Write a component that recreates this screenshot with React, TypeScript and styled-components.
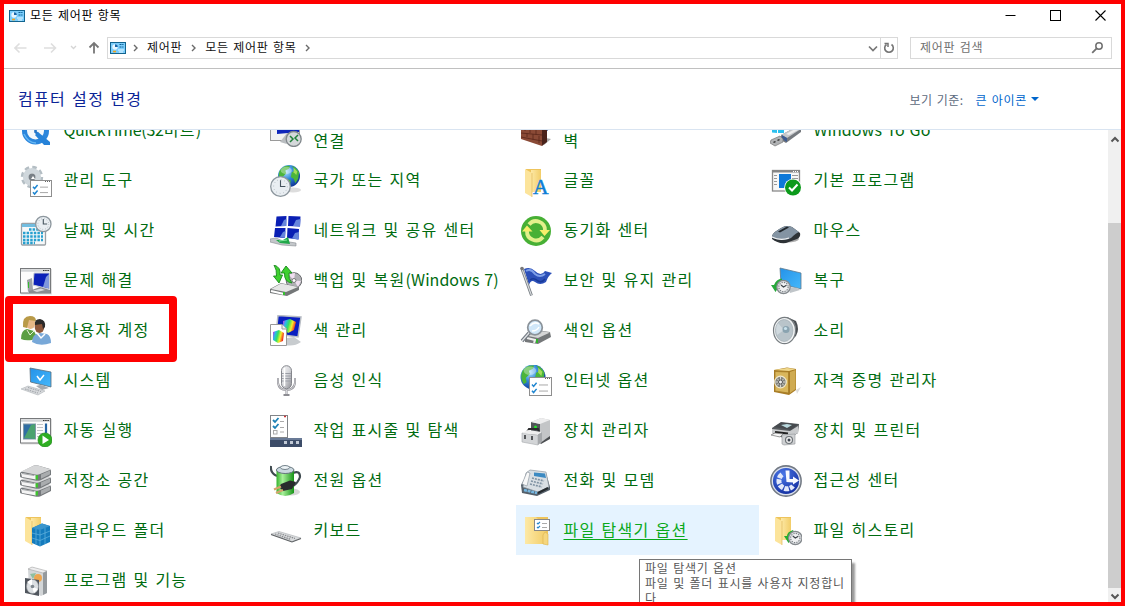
import React from 'react';
import styled, { createGlobalStyle } from 'styled-components';

const GlobalStyle = createGlobalStyle`
  * { box-sizing: border-box; }
  html, body { margin: 0; padding: 0; overflow: hidden; }
  body { font-family: "Noto Sans CJK KR", "Noto Sans", sans-serif; background: #fff; }
`;

const Window = styled.div`
  position: relative;
  display: flex;
  flex-direction: column;
  width: 1125px;
  height: 606px;
  border: 4px solid #ff0000;
  background: #fff;
  overflow: hidden;
  font-size: 12px;
  letter-spacing: 0.7px;
  word-spacing: 1.1px;
`;

const TitleBar = styled.header`
  display: flex;
  align-items: center;
  height: 23px;
  padding: 0 15px 0 5px;
  color: #000;
`;

const TitleText = styled.span`
  flex: 1;
  margin: -2px 0 0 5px;
  line-height: 20px;
`;

const WindowButtons = styled.div`
  display: flex;
  gap: 34px;
  margin-top: -1px;
  svg { display: block; }
`;

const NavBar = styled.nav`
  display: flex;
  align-items: center;
  height: 42px;
  padding: 0 9px 0 10px;
  border-bottom: 1px solid #c0c0c0;
`;

const NavArrows = styled.div`
  display: flex;
  align-items: center;
  width: 93px;
  svg { display: block; }
`;

const AddressBar = styled.div`
  display: flex;
  align-items: center;
  width: 791px;
  height: 22px;
  border: 1px solid #d9d9d9;
  padding-left: 2px;
  color: #111;
  line-height: 19px;
  svg { display: block; flex: none; }
`;

const Crumb = styled.span`
  margin: -3px 9px 0 8px;
`;

const RefreshButton = styled.div`
  display: flex;
  align-items: center;
  justify-content: center;
  width: 17px;
  height: 20px;
  margin-left: 2px;
  border-left: 1px solid #d9d9d9;
`;

const Spring = styled.div`
  flex: 1;
`;

const SearchBox = styled.div`
  display: flex;
  align-items: center;
  justify-content: space-between;
  width: 202px;
  height: 22px;
  margin-left: 12px;
  padding: 0 7px 0 9px;
  border: 1px solid #d9d9d9;
  color: #707070;
  span { margin-top: -3px; line-height: 19px; }
`;

const Heading = styled.div`
  display: flex;
  align-items: center;
  height: 61px;
  padding: 0 82px 0 14px;
  border-bottom: 1px solid #d9e4f1;
`;

const HeadingTitle = styled.h1`
  flex: 1;
  margin: -2px 0 0;
  font-size: 16px;
  font-weight: 400;
  letter-spacing: 1.32px;
  line-height: 24px;
  color: #0b2497;
`;

const ViewLabel = styled.span`
  color: #5d6b80;
  letter-spacing: 0.45px;
  margin-right: 12px;
`;

const ViewValue = styled.span`
  color: #0066cc;
  margin-right: 4px;
`;

const Body = styled.div`
  display: flex;
  height: 472px;
  overflow: hidden;
`;

const Grid = styled.div`
  display: grid;
  grid-template-columns: repeat(4, 243px);
  grid-auto-rows: 50px;
  column-gap: 7px;
  width: 1104px;
  margin-top: -25px;
  padding-left: 12px;
`;

const Item = styled.div<{ $hover?: boolean }>`
  display: flex;
  align-items: center;
  gap: 11.5px;
  padding: 1px 4px 0;
  background: ${(p) => (p.$hover ? '#e5f3ff' : 'transparent')};
`;

const ItemIcon = styled.svg`
  flex: none;
  display: block;
`;

const ItemLabel = styled.span<{ $hover?: boolean; $low?: boolean }>`
  font-size: 16px;
  line-height: 20px;
  letter-spacing: 1.3px;
  white-space: nowrap;
  color: ${(p) => (p.$hover ? '#0aa81a' : '#006b10')};
  margin-top: ${(p) => (p.$low ? '19px' : '-3px')};
  text-decoration: ${(p) => (p.$hover ? 'underline' : 'none')};
  text-decoration-thickness: 1px;
  text-underline-offset: 3px;
`;

const Latin = styled.span<{ $tight?: boolean }>`
  letter-spacing: ${(p) => (p.$tight ? '-0.25px' : '0.05px')};
`;

const ScrollBar = styled.div`
  display: flex;
  flex-direction: column;
  width: 13px;
  height: 472px;
  background: #f0f0f0;
  svg { display: block; flex: none; }
`;

const ScrollGap = styled.div`
  height: 76px;
`;

const Thumb = styled.div`
  flex: 1;
  background: #cdcdcd;
`;

const Highlight = styled.div`
  position: absolute;
  left: 1px;
  top: 292px;
  width: 172px;
  height: 66px;
  border: 8px solid #ff0000;
  border-radius: 4px;
`;

const Tooltip = styled.div`
  position: absolute;
  left: 635px;
  top: 555px;
  width: 213px;
  height: 60px;
  padding: 0 5px;
  border: 1px solid #767676;
  background: #fff;
  box-shadow: 3px 4px 2px rgba(0, 0, 0, 0.4);
  color: #575757;
  letter-spacing: 0.76px;
  line-height: 15px;
  white-space: nowrap;
`;

const Defs = () => (
  <svg width="0" height="0" style={{ display: 'block' }}>
    <defs>
      <linearGradient id="screen" x1="0" y1="0" x2="1" y2="1">
        <stop offset="0" stopColor="#0a18a8" /><stop offset=".45" stopColor="#0620c4" />
        <stop offset=".55" stopColor="#6f8ee6" /><stop offset="1" stopColor="#1c3bbd" />
      </linearGradient>
      <linearGradient id="metal" x1="0" y1="0" x2="1" y2="1">
        <stop offset="0" stopColor="#fbfbfb" /><stop offset=".5" stopColor="#d6d7db" /><stop offset="1" stopColor="#8c8c92" />
      </linearGradient>
      <linearGradient id="fold" x1="0" y1="0" x2="1" y2="0">
        <stop offset="0" stopColor="#fde9a6" /><stop offset="1" stopColor="#f2cd68" />
      </linearGradient>
      <linearGradient id="sky" x1="0" y1="0" x2="1" y2="1">
        <stop offset="0" stopColor="#2492e8" /><stop offset="1" stopColor="#45b8fb" />
      </linearGradient>
      <linearGradient id="batt" x1="0" y1="0" x2="1" y2="0">
        <stop offset="0" stopColor="#35b52d" /><stop offset=".35" stopColor="#a8f09a" /><stop offset="1" stopColor="#169316" />
      </linearGradient>
      <linearGradient id="rgb" x1="0" y1="0" x2="1" y2=".3">
        <stop offset="0" stopColor="#e81ee0" /><stop offset=".25" stopColor="#2bb6f0" /><stop offset=".5" stopColor="#31e060" />
        <stop offset=".75" stopColor="#f7ee2a" /><stop offset="1" stopColor="#f03020" />
      </linearGradient>
      <radialGradient id="globe" cx=".35" cy=".3" r=".8">
        <stop offset="0" stopColor="#b6e6ff" /><stop offset=".45" stopColor="#2f86d8" /><stop offset="1" stopColor="#0b2a8c" />
      </radialGradient>
      <radialGradient id="deep" cx=".4" cy=".3" r=".8">
        <stop offset="0" stopColor="#4b78e8" /><stop offset="1" stopColor="#0a2294" />
      </radialGradient>
    </defs>
  </svg>
);

const Clock = ({ x, y, r }: { x: number; y: number; r: number }) => (
  <g>
    <circle cx={x} cy={y} r={r} fill="#e9eef2" stroke="#8d979e" strokeWidth="1.3" />
    <circle cx={x} cy={y} r={r * 0.7} fill="none" stroke="#a4adb4" strokeWidth=".9" strokeDasharray={`.8 ${r * 0.366 - 0.8}`} />
    <path d={`M${x} ${y - r * 0.65}V${y}H${x + r * 0.5}`} fill="none" stroke="#46545f" strokeWidth="1.1" />
  </g>
);

const SmallClock = ({ x, y }: { x: number; y: number }) => (
  <g>
    <circle cx={x} cy={y} r="6.7" fill="#d9dcdf" stroke="#84898d" strokeWidth="1.2" />
    <circle cx={x} cy={y} r="4.6" fill="#f0f1f2" stroke="#777c80" strokeWidth="1.1" strokeDasharray="1.2 1.2" />
    <path d={`M${x - 2.5} ${y - 2}L${x} ${y}L${x + 3} ${y - 1.8}`} fill="none" stroke="#3f464b" strokeWidth="1.2" />
  </g>
);

const Globe = ({ x, y, r }: { x: number; y: number; r: number }) => (
  <g transform={`translate(${x} ${y}) scale(${r / 12})`}>
    <circle r="12" fill="url(#globe)" />
    <path d="M-10-6Q-6-12 1-11L0-8-4-6-3-3-7 1-6 5-9 7Q-13 0-10-6ZM3-11Q8-10 11-4L10 3 7 8 5 3 2 1 3-4 7-6ZM-3 3L2 5 1 10-2 11Z" fill="#4bb53a" />
    <path d="M5-9L9-5 8-1 5-4Z" fill="#a4dd5a" />
    <ellipse cx="-3" cy="-6" rx="6" ry="4" fill="#fff" opacity=".35" />
  </g>
);

const Folder = ({ wide }: { wide?: boolean }) => (
  <g>
    <path d={wide ? 'M7 2H28V28H7Z' : 'M6 2H21V25H6Z'} fill="#eec45c" />
    <path d={wide ? 'M5 2H16L18 4H26V29H5Z' : 'M11 3H21V25H11Z'} fill="url(#fold)" />
    {!wide && <path d="M5 2L12 6V30L5 26Z" fill="#fce49b" />}
    {!wide && <path d="M12 6V30" stroke="#dfb95b" strokeWidth=".7" />}
  </g>
);

const Sheet = ({ x, y, w, h }: { x: number; y: number; w: number; h: number }) => (
  <g>
    <rect x={x + 0.5} y={y + 0.5} width={w - 1} height={h - 1} fill="#fff" stroke="#8e8e8e" />
    <path d={`M${x + w - 7} ${y + 1.5}h5`} stroke="#666" strokeDasharray="1 1" />
    <path d={`M${x + 3} ${y + h * 0.4}l1.6 1.8 3-3.6M${x + 3} ${y + h * 0.72}l1.6 1.8 3-3.6`} fill="none" stroke="#1f86d1" strokeWidth="1.5" />
    <path d={`M${x + 10} ${y + h * 0.42}h${w - 14}M${x + 10} ${y + h * 0.74}h${w - 14}`} stroke="#a8a8a8" />
  </g>
);

const Drive = ({ y }: { y: number }) => (
  <g transform={`translate(0 ${y})`}>
    <path d="M1 7L14 0.5Q16 0 18 .5L30 4Q31 5 31 6V10L20 15.5Q18 16 15 15.5L1 12.5Q0 12 0 11V8Z" fill="#75797c" />
    <path d="M1 6.5L14 .5Q16 0 18 .5L31 4.5 20 9Q18 10 15 9.5Z" fill="#d6d7d8" />
    <path d="M1 8L16 10.5V14.5L2 12Z" fill="#f4f4f4" />
    <path d="M2 8.5L14 10.5" stroke="#a6a9ab" />
    <path d="M15.5 10.5L18 10V14.5L15.5 14.5Z" fill="#3fc32e" />
    <path d="M21 9.5L30 5.5V9.3L21 13.8Z" fill="#a9acae" />
  </g>
);

const AppGlyph = () => (
  <svg width="16" height="12" viewBox="0 0 16 12">
    <rect x=".5" y=".5" width="15" height="11" fill="#7bcdfb" stroke="#12648f" />
    <circle cx="5" cy="5" r="2.7" fill="#e7f6ff" />
    <path d="M5 5V2.2A2.8 2.8 0 0 1 7.8 5Z" fill="#1765a8" />
    <path d="M9.5 2.5h4M9.5 5h4" stroke="#0d5f93" strokeDasharray="2 .7" />
    <path d="M3 9.5h3" stroke="#f2a21a" strokeWidth="1.6" />
    <path d="M8 8h6M9 10h4" stroke="#e9f7ff" />
  </svg>
);

const ICONS: Record<string, React.ReactNode> = {
  quicktime: (
    <g>
      <circle cx="15.500" cy="16" r="11" fill="#f4f8fb" stroke="#2b86dc" strokeWidth="5" />
      <path d="M4 19Q8 28 16 28" fill="none" stroke="#65b6f3" strokeWidth="1.500" />
      <path d="M15.500 9V17L18 19" fill="none" stroke="#2675c6" strokeWidth="2.600" />
      <path d="M18 17L30 27V30H24L15 20Z" fill="#2682d8" />
    </g>
  ),
  remote: (
    <g>
      <rect x=".5" y="2" width="29" height="23.500" fill="#f2f2f2" stroke="#9a9a9a" />
      <path d="M7 4L29 3V17L7 19Z" fill="#0e25ba" />
      <path d="M10 27L17 18 26 18 25 29Q18 30 10 27Z" fill="#b9bdc0" />
      <circle cx="23.700" cy="24" r="7.500" fill="#d4d8da" stroke="#80878b" strokeWidth="1.300" />
      <path d="M20 21L23 24 20 27M28 20L25 23 28 26" fill="none" stroke="#20803a" strokeWidth="1.500" />
    </g>
  ),
  firewall: (
    <g>
      <Globe x={20} y={9} r={10} />
      <path d="M24 30L31 24 26 23Z" fill="#aaa" />
      <path d="M1 6L22 2V31L1 24Z" fill="#8a4a36" /><path d="M22 2L27 5V27L22 31Z" fill="#4a231b" />
      <path d="M1 10L22 8M1 14L22 14M1 18L22 20M1 22L22 26M7 18V22M13 19V25M19 21V28M10 14V18M16 14V20M5 12V16" stroke="#5f2a1d" strokeWidth=".9" />
    </g>
  ),
  usb: (
    <g>
      <path d="M2 11L7 10V14H2ZM8 10L14 9V14H8ZM2 15H7V18L2 17.500ZM8 15H14V18H8Z" fill="#2cc0ee" />
      <path d="M11 20L26 12Q31 11 31 15V17L16 28 11 25Z" fill="#75797e" />
      <path d="M11 20L26 12Q30 12 31 14L17 23Z" fill="#c5c8cb" /><path d="M16 19L25 14 28 15 19 20Z" fill="#eee" />
      <path d="M12 20L17 23V27L12 24Z" fill="#3e5c91" />
      <path d="M1 25L10 21 13 24V27L5 31 0 28Z" fill="#b0b2b4" stroke="#777" strokeWidth=".7" /><path d="M3 27l2-1 1 1-2 1ZM7 25l2-1 1 1-2 1Z" fill="#333" />
    </g>
  ),
  tools: (
    <g>
      <circle cx="12" cy="12" r="8.700" fill="none" stroke="#b4bec4" strokeWidth="5" strokeDasharray="4 2.830" />
      <circle cx="12" cy="12" r="6.300" fill="none" stroke="#cfd7dc" strokeWidth="5.600" />
      <circle cx="12" cy="12" r="3.500" fill="#777f86" /><path d="M13 11L15 14H11Z" fill="#fff" />
      <Sheet x={10} y={15} w={22} h={17} />
    </g>
  ),
  region: (<g><ellipse cx="23" cy="25" rx="8" ry="2.500" fill="#ddd" /><Globe x={19} y={11} r={11} /><Clock x={10.5} y={21.5} r={9.8} /></g>),
  fonts: (
    <g><g transform="translate(0 2)"><Folder /></g>
      <text x="13" y="29" fontFamily="Liberation Serif, serif" fontSize="21.500" letterSpacing="0" fill="#0d7ed6" stroke="#0d7ed6" strokeWidth=".5">A</text>
    </g>
  ),
  defaults: (
    <g>
      <rect x="2.500" y="5.500" width="27" height="20.500" fill="#f7f7f7" stroke="#8a8a8a" strokeWidth="1.300" />
      <path d="M2 6.500H30" stroke="#858585" strokeWidth="2" /><path d="M23 6.500h6" stroke="#fff" strokeDasharray="1 1" />
      <path d="M4 10.500h3M4 13.500h3M4 16.500h3M4 19.500h3M22 10.500h6M22 13.500h6" stroke="#999" />
      <rect x="9" y="9" width="12" height="14" fill="#0e78d8" />
      <circle cx="23" cy="22.500" r="8.800" fill="#fff" /><circle cx="23" cy="22.500" r="8" fill="#0c9a1b" />
      <path d="M19 22.500L22 25.500 27.500 19.500" fill="none" stroke="#fff" strokeWidth="2" />
    </g>
  ),
  date: (
    <g>
      <rect x="1.500" y="8.500" width="24" height="21.500" rx="1" fill="#f6f8f9" stroke="#9aa1a6" strokeWidth="1.300" />
      <path d="M2 9H25V12H2Z" fill="#72bde0" />
      <path d="M9 14.500H23M3 18H23M3 21.500H23M3 25H23M3 28H15" stroke="#27a0cf" strokeWidth="2.300" strokeDasharray="2.500 1.100" />
      <Clock x={23.3} y={9} r={7.7} />
    </g>
  ),
  network: (
    <g>
      <g fill="#0a1fb4">
        <path d="M6.500 1.500L16.500 1 16 11 5.500 11.500ZM18.500 1L30.500 1.500 30 11.500 18 11ZM5 13L15.500 13 15 23 4 22ZM17.500 13L29 14 28.500 24.500 17 23Z" />
      </g>
      <path d="M11 11L14 5 16.500 4V11ZM23 11L26 5 30.500 4 30 11.500ZM10 22L13 17 15.500 16 15 23ZM22 23.500L25 18 29 17 28.500 24.500Z" fill="#6685dc" />
      <path d="M0 24L6 23 13 26 26 28 26 31 12 30 0 27Z" fill="#c3c7ca" stroke="#868b90" strokeWidth=".6" />
      <path d="M6 25L13 25 18 22 20 29 10 28Z" fill="#21a84a" /><path d="M9 26L17 25" stroke="#86e79f" />
    </g>
  ),
  sync: (
    <g>
      <circle cx="16" cy="16" r="15" fill="#47b035" />
      <path d="M9 9.500A9 9 0 0 1 25 15.500" fill="none" stroke="#e2f08c" strokeWidth="3.800" />
      <path d="M7 16A9 9 0 0 0 23 22" fill="none" stroke="#e2f08c" strokeWidth="3.800" />
      <path d="M2 16.500L7 10.500 12.500 16.500ZM19.500 15H30L24.500 21Z" fill="#f7ee6a" />
    </g>
  ),
  mouse: (
    <g>
      <ellipse cx="17" cy="24" rx="12" ry="3.500" fill="#555" opacity=".5" />
      <path d="M2 21Q3 17 13 12Q17 10 22 12L30 18Q31 22 27 24L16 28Q8 29 2 24Z" fill="#2d3236" />
      <path d="M2 21Q3 17 13 12Q17 10 22 12L29 17Q26 18 21 23 14 27 2 23Z" fill="#8494a3" />
      <path d="M2 22Q10 26 19 23" fill="none" stroke="#f3f3f3" strokeWidth="1.300" />
      <path d="M8 16.500L17 11.500 19 12.500 10 17.500Z" fill="#22282d" />
    </g>
  ),
  trouble: (
    <g>
      <rect x="1" y="4" width="31" height="25.500" fill="#ccc" opacity=".6" />
      <rect x=".5" y="3.500" width="30" height="24.500" fill="#fcfcfc" stroke="#77797b" />
      <path d="M1 5.500H30" stroke="#d2d5d7" strokeWidth="2.500" /><path d="M23 5.500h6" stroke="#333" strokeDasharray="1.500 .7" />
      <path d="M7 15L12 13 13 25 8 27Z" fill="#9ea3a8" /><path d="M8.500 17v6" stroke="#33bb2e" />
      <path d="M14 8L29.500 8V24L13 20Z" fill="#0b20b8" stroke="#cdd1d6" /><path d="M23 22L26 12 29 9V23.500Z" fill="#7f97dc" />
      <path d="M9 26L20 22 30 25V28H9Z" fill="#898d92" /><path d="M13 25.500L21 23.500 25 25 17 27Z" fill="#d7dadd" />
    </g>
  ),
  backup: (
    <g>
      <circle cx="24" cy="15.500" r="7.800" fill="#b0b0b4" stroke="#6a6b6e" /><path d="M24 15.500L18 9 25 8ZM24 15.500L31 16 28 22Z" fill="#f0dff0" /><circle cx="24" cy="15.500" r="2" fill="#fff" stroke="#777" />
      <path d="M0 24L11 18 29 22V25L17 31 0 28Z" fill="#747778" /><path d="M1 24L11 18.500 28 22 16 27Z" fill="#e6e6e6" /><path d="M1 26L14 29" stroke="#fff" strokeWidth="2" /><path d="M14 27v3" stroke="#35c02f" strokeWidth="2" />
      <path d="M4 0Q11 2 10 10H12.500L9 18 3.500 11H6.500Q7 5 4 0ZM11 8L16 1 22 8H19Q18 14 22 18 14 17 14.500 8Z" fill="#3ed02e" stroke="#16881a" strokeWidth=".9" />
    </g>
  ),
  flag: (
    <g>
      <path d="M4 4Q10 1 15 6 21 12 25 6L32 8Q28 11 26 17 20 21 15 17 11 14 9 20Z" fill="#2c50b8" />
      <path d="M6 6Q11 3 15 9 20 13 25 9" fill="none" stroke="#7d9fe8" strokeWidth="2" /><path d="M10 15Q14 12 18 16 22 18 25 14" fill="none" stroke="#183a99" strokeWidth="1.500" />
      <path d="M2 4L11.500 30.500" stroke="#777d83" strokeWidth="2.800" /><path d="M2 4L11.500 30.500" stroke="#dadde0" strokeWidth="1.100" /><circle cx="2" cy="3.500" r="1.800" fill="#777" />
    </g>
  ),
  recovery: (
    <g>
      <path d="M10 3L31 8V24L11 19Z" fill="url(#sky)" stroke="#5f7a8d" strokeWidth=".8" /><path d="M18 22L28 23 30 25 20 28Z" fill="#c0c5c9" />
      <path d="M12 13.500A10 10 0 0 0 4 20H1L5.500 27 10 20H7.500Q9 17 12 16Z" fill="#27a83b" /><SmallClock x={13.5} y={22} />
    </g>
  ),
  users: (
    <g>
      <path d="M1 24Q1 15 7 14L14 16 17 22 12 25Q5 26 1 24Z" fill="#5b9f43" /><path d="M7 15l3 5 4-4" fill="none" stroke="#e5f1da" />
      <ellipse cx="10.500" cy="8" rx="4.800" ry="6" fill="#e7b887" /><path d="M3 12Q2 1 10 1 16 1 16 6L9 5 7 13Z" fill="#b99a48" />
      <path d="M12 27Q12 19 20 18L27 19Q31 21 31 28 20 32 12 27Z" fill="#78a8d8" /><path d="M17 18l4 5 4-4" fill="none" stroke="#fff" strokeWidth="1.500" />
      <ellipse cx="19.500" cy="12" rx="4.800" ry="6" fill="#8f583b" /><path d="M15 10Q14 4 20 4 26 5 25 12L23 14 22 9Z" fill="#2c2a2a" />
    </g>
  ),
  color: (
    <g>
      <path d="M8 .5L31 2 28 22 6 19Z" fill="#0a1fc0" stroke="#babfc5" strokeWidth="1.500" />
      <path d="M17 23L24 22 31 27Q24 32 15 30Z" fill="#c8cccf" />
      <path d="M13 6L20 4 26 7 24 15 18 18 13 13Z" fill="url(#rgb)" />
      <path d="M.5 9.500H12L16.500 14V30.500H.5Z" fill="#fff" stroke="#999" /><path d="M12 9.500V14H16.500" fill="#eee" stroke="#999" />
      <path d="M3 17L9 15 14 18 13 26 8 28 3 25Z" fill="url(#rgb)" />
    </g>
  ),
  indexing: (
    <g>
      <path d="M5 21L15 15 30 17 31 22 18 29 5 27Z" fill="#75787a" /><path d="M8 21L17 15.500 30 17.500 18 23Z" fill="#d5d6d6" /><path d="M7 23L15 25 14 28" stroke="#eee" fill="none" strokeWidth="2" /><path d="M17 24v4" stroke="#30b52a" strokeWidth="2" />
      <path d="M9 18L2 26" stroke="#757c84" strokeWidth="3.500" /><path d="M9 18L2 26" stroke="#e3e5e7" strokeWidth="1.200" />
      <circle cx="15" cy="12.500" r="7.300" fill="#d0e7f9" stroke="#8b9299" strokeWidth="1.700" /><path d="M10 11Q14 6 19 9M12 16Q17 16 19 12" fill="none" stroke="#fff" strokeWidth="1.500" />
    </g>
  ),
  sound: (
    <g>
      <path d="M17 2L26 6Q30 14 26 21L18 28Z" fill="#4b4f53" /><path d="M23 6Q28 14 23 23" fill="none" stroke="#8d9296" />
      <ellipse cx="14.500" cy="15.500" rx="11" ry="13.200" fill="#f1f3f4" stroke="#777d81" strokeWidth="1.200" />
      <ellipse cx="14.200" cy="15.500" rx="8.800" ry="11" fill="#b9c4ca" stroke="#a3adb3" strokeWidth=".7" />
      <path d="M14 15L8 8Q5 13 7 20Z" fill="#d0d9de" /><circle cx="16" cy="14.500" r="3.500" fill="#8aa3b0" /><circle cx="15.500" cy="13.500" r="1.600" fill="#c9e2ed" />
    </g>
  ),
  system: (
    <g>
      <path d="M10 3L31 7V22L10.500 17Z" fill="url(#sky)" stroke="#596d7b" strokeWidth=".8" /><path d="M17 11L20 15 24 10" fill="none" stroke="#fff" strokeWidth="1.500" />
      <path d="M20 20L23 20.500 29 23 22 25 16 21Z" fill="#a5abb0" />
      <path d="M1 24L8 21 25 26 18 30Z" fill="#d7d9dc" stroke="#a3a8ad" strokeWidth=".5" /><path d="M5 24l13 4M8 22.500l13 4" stroke="#9ca1a6" strokeDasharray="1.500 1" />
    </g>
  ),
  mic: (
    <g>
      <path d="M8 13V18Q9 25 16.500 25 24 25 25 18V13M16.500 25V29" fill="none" stroke="#8c8c92" strokeWidth="2" />
      <path d="M8 13V18Q9 25 16.500 25 24 25 25 18V13M16.500 25V29" fill="none" stroke="#e6e6ea" strokeWidth=".8" />
      <path d="M13.500 30H19.500" stroke="#8c8c92" strokeWidth="2" />
      <rect x="11.500" y=".7" width="10" height="23" rx="5" fill="url(#metal)" stroke="#84868c" />
      <path d="M12 8.500H21M12 11H21M12 13.500H21M12 16H21" stroke="#9a9da5" /><path d="M14.500 3V21" stroke="#fff" strokeWidth="1.500" />
    </g>
  ),
  internet: (<g><Globe x={13} y={12} r={12.5} /><Sheet x={9} y={12} w={23} h={19} /></g>),
  safe: (
    <g>
      <path d="M26 25L31 22 27 29Z" fill="#ddd" />
      <path d="M4 5L17 2.500 26 4 26 25 19 30 4 27Z" fill="#a97c25" /><path d="M4 5L17 3 26 4 19 6Z" fill="#f0d88c" /><path d="M5 6.500L18.500 7V28L5 26Z" fill="#d9b65c" stroke="#a27a25" strokeWidth=".7" /><path d="M20 7L25.500 5V24L20 28Z" fill="#cfab52" />
      <circle cx="10.500" cy="17" r="5.800" fill="#83847e" stroke="#efe8cf" strokeWidth="1.200" /><path d="M10.500 12V22M5.500 17H15.500M7 13.500L14 20.500M14 13.500L7 20.500" stroke="#e1e1de" strokeWidth=".9" /><circle cx="10.500" cy="17" r="2" fill="#eee" stroke="#555" />
    </g>
  ),
  autoplay: (
    <g>
      <rect x="1" y="4" width="31" height="25.500" fill="#ccc" opacity=".6" /><rect x=".5" y="3.500" width="30" height="24.500" fill="#fcfcfc" stroke="#77797b" />
      <path d="M1 5.500H30" stroke="#d2d5d7" strokeWidth="2.500" /><path d="M23 5.500h6" stroke="#333" strokeDasharray="1.500 .7" />
      <rect x="3.500" y="9" width="12" height="15" fill="#2f6ea3" stroke="#8199a8" /><path d="M4 23L11 10 15 9V24Z" fill="#4ba26f" />
      <path d="M17 9.500h6M17 12.500h6M17 15.500h6M17 18.500h6M17 21.500h4" stroke="#bfc3c6" /><path d="M26 8.500V18" stroke="#2364a4" strokeWidth="2.200" />
      <circle cx="25" cy="25" r="7" fill="#2eae22" stroke="#1c8c16" strokeWidth=".7" /><path d="M22.500 20.500V29L29 25Z" fill="#fff" />
    </g>
  ),
  taskbar: (
    <g>
      <rect x=".5" y=".5" width="17" height="22" fill="#fff" stroke="#818488" /><path d="M14 1.500h2" stroke="#c33" strokeWidth="1.500" />
      <path d="M3 5L5 7 8.500 3M3 11L5 13 8.500 9" fill="none" stroke="#1d82b7" strokeWidth="1.800" /><rect x="3.500" y="15.500" width="3.500" height="3.500" fill="none" stroke="#aaa" />
      <path d="M10 6.500h4M10 12.500h4M10 17h4" stroke="#aaa" />
      <rect y="23" width="32" height="9" fill="#3c4c68" /><path d="M0 24H32" stroke="#697a96" strokeWidth="2" /><path d="M14 27.500H30" stroke="#c1c9d5" strokeWidth="3" strokeDasharray="3 3" />
    </g>
  ),
  device: (
    <g>
      <path d="M11 7L21 3 30 5V23L20 27 11 24Z" fill="#c3c5c7" /><path d="M11 7L20 9V26L11 24Z" fill="#505458" /><path d="M11 7L21 3 30 5 20 9Z" fill="#ededee" /><path d="M20 28L30 21V24L21 29Z" fill="#4b4e51" /><circle cx="15.500" cy="12" r="1.500" fill="#26e32c" />
      <path d="M7 17L9 14 18 14 19 17" fill="none" stroke="#292b2d" strokeWidth="2" /><path d="M2 18L18 20V30L2 27Z" fill="#d3d5d7" stroke="#a4a7ab" strokeWidth=".6" /><path d="M2 18L8 15 22 17 18 20Z" fill="#eee" /><path d="M18 20L22 17V27L18 30Z" fill="#a4a7aa" /><path d="M5 20v4M12 21v4" stroke="#474a4d" strokeWidth="1.800" />
    </g>
  ),
  printer: (
    <g>
      <path d="M2 13L11 7 29 9 28 18 18 24 3 20Z" fill="#565a5e" /><path d="M4 12L11 7.500 28 9.500 21 15Z" fill="#464a4e" /><path d="M11 10L17 9 22 10 17 13Z" fill="#b9d9de" />
      <path d="M2 14L20 16 28 11V18L20 22 2 18Z" fill="#c9cbcd" /><path d="M5 17L18 18.500" stroke="#222" strokeWidth="2" /><path d="M1 20L5 18 13 19 10 22Z" fill="#f7f7f7" stroke="#777" strokeWidth=".7" />
      <path d="M12 20L25 19V29L14 30 12 29Z" fill="#cfd1d3" stroke="#929598" strokeWidth=".6" /><circle cx="19" cy="25" r="3.500" fill="#eee" stroke="#6e7377" strokeWidth="1.200" /><circle cx="19" cy="25" r="1.500" fill="#3d4550" />
    </g>
  ),
  storage: (<g><Drive y={16} /><Drive y={8} /><Drive y={0} /></g>),
  power: (
    <g>
      <ellipse cx="21" cy="27" rx="9" ry="3.500" fill="#bbb" opacity=".6" />
      <path d="M1 1Q0 8 7 11M23 8Q30 5 30 12 28 18 23 21" fill="none" stroke="#404b50" strokeWidth="2.200" />
      <path d="M6.500 5V28Q15 34 24 28V5Z" fill="url(#batt)" /><ellipse cx="15.200" cy="5" rx="8.800" ry="3.500" fill="#cbd8e0" stroke="#64747c" /><ellipse cx="15" cy="2.500" rx="4.500" ry="2" fill="#edf3f6" stroke="#74838b" />
      <path d="M11 19L20 15.500 26 17 22 24 13 26 9 22Z" fill="#292b2d" /><path d="M11 21.500L4 24.500M13 25L6 28" stroke="#d5a36b" strokeWidth="2.300" />
    </g>
  ),
  phone: (
    <g>
      <path d="M1 20L9 6 26 8 30 22V25L17 31 2 28Z" fill="#55606a" /><path d="M6 8L10 5 26 7 29 22 18 27 3 22Z" fill="#d9dfe4" stroke="#909aa2" strokeWidth=".7" /><path d="M14 7.500L25 8.500 26 13 14 11Z" fill="#3c8ac2" />
      <path d="M2 19L7 7 10 8 7 21Z" fill="#f8f8f8" stroke="#87919a" strokeWidth=".6" /><path d="M12 13l12 3M11 16l12 3M10 19l12 3" stroke="#8093a3" strokeWidth="1.700" strokeDasharray="2 1" /><path d="M4 25L17 28" stroke="#76b6e0" strokeWidth="2.600" strokeDasharray="3 .7" /><path d="M18 28L28 23" stroke="#242a2e" strokeWidth="2" />
    </g>
  ),
  ease: (
    <g>
      <circle cx="16" cy="16" r="15" fill="url(#deep)" stroke="#737a84" strokeWidth="1.800" /><circle cx="16" cy="16" r="13.700" fill="none" stroke="#dce1ea" strokeWidth="1.300" />
      <path d="M15.500 5.500H19.500V14H23V11.500L29 15.500 23 19.500V17.500L16.500 17Z" fill="#f8faff" />
      <path d="M12 9.500A8 8 0 1 0 23 21" fill="none" stroke="#e3e9fa" strokeWidth="5" strokeDasharray="4.500 1.200" />
    </g>
  ),
  cloud: (
    <g><Folder /><path d="M12 13L22 8.500 30 11V27L20 31.500 12 28Z" fill="#147bbd" /><path d="M12 13L22 8.500 30 11 20 15Z" fill="#3a95cd" />
      <path d="M12 18L20 20 30 16M12 23L20 25.500 30 21M16 14V29.500M20 15V31M25 13V29" fill="none" stroke="#66b5e0" strokeWidth=".7" /></g>
  ),
  keyboard: (
    <g><path d="M1 19L9 16.500 31 23 22 26.500Z" fill="#dadcde" stroke="#aaadb0" strokeWidth=".6" /><path d="M1 19.500L22 27 31 23.500" fill="none" stroke="#5d6063" strokeWidth="1.100" /><path d="M5 19L21 24.500M8 18L25 23.500" stroke="#888a8d" strokeWidth="1.200" strokeDasharray="1.500 .9" /></g>
  ),
  options: (
    <g><Folder wide /><path d="M23 29V20L25 17 28 19V30Z" fill="#f5d67e" stroke="#dcb34b" strokeWidth=".6" />
      <rect x="14.500" y="4.500" width="15" height="11" fill="#fff" stroke="#888" /><path d="M17 8l1 1 2-2M17 12l1 1 2-2" fill="none" stroke="#2785ca" strokeWidth="1.200" /><path d="M22 8.500h5M22 12.500h5" stroke="#aaa" /></g>
  ),
  history: (<g><Folder /><path d="M23 15Q17 17 17 21H14L18.500 28 23 22H20.500Q21 19 24 17Z" fill="#24ad30" /><SmallClock x={25.3} y={23} /></g>),
  programs: (
    <g>
      <path d="M8 4L12 2 27 7V28L21 31 9 24Z" fill="#d3d6d8" /><path d="M8 4L12 2 27 6 23 8Z" fill="#eeeeef" stroke="#999" strokeWidth=".5" /><path d="M23 8L27 6V28L23 30Z" fill="#959a9e" /><circle cx="18" cy="13" r="4" fill="#eca650" /><path d="M10 9L16 8 13 14Z" fill="#8ebfa0" />
      <path d="M5 13L19 15V31L5 28Z" fill="#50565e" /><ellipse cx="12.500" cy="21.500" rx="6" ry="7" fill="#dce0e3" stroke="#92979b" strokeWidth=".6" /><path d="M12 21L7 17 12 14ZM12 22L18 24 14 28Z" fill="#fff" /><circle cx="12.500" cy="21.500" r="1.800" fill="#80888f" />
    </g>
  ),
};

interface Entry { icon: string; label: React.ReactNode; low?: boolean; hover?: boolean }

const ENTRIES: Entry[] = [
  { icon: 'quicktime', label: <><Latin $tight>QuickTime(32</Latin>비트<Latin>)</Latin></> },
  { icon: 'remote', label: '연결', low: true },
  { icon: 'firewall', label: '벽', low: true },
  { icon: 'usb', label: <Latin>Windows To Go</Latin> },
  { icon: 'tools', label: '관리 도구' },
  { icon: 'region', label: '국가 또는 지역' },
  { icon: 'fonts', label: '글꼴' },
  { icon: 'defaults', label: '기본 프로그램' },
  { icon: 'date', label: '날짜 및 시간' },
  { icon: 'network', label: '네트워크 및 공유 센터' },
  { icon: 'sync', label: '동기화 센터' },
  { icon: 'mouse', label: '마우스' },
  { icon: 'trouble', label: '문제 해결' },
  { icon: 'backup', label: <>백업 및 복원<Latin>(Windows 7)</Latin></> },
  { icon: 'flag', label: '보안 및 유지 관리' },
  { icon: 'recovery', label: '복구' },
  { icon: 'users', label: '사용자 계정' },
  { icon: 'color', label: '색 관리' },
  { icon: 'indexing', label: '색인 옵션' },
  { icon: 'sound', label: '소리' },
  { icon: 'system', label: '시스템' },
  { icon: 'mic', label: '음성 인식' },
  { icon: 'internet', label: '인터넷 옵션' },
  { icon: 'safe', label: '자격 증명 관리자' },
  { icon: 'autoplay', label: '자동 실행' },
  { icon: 'taskbar', label: '작업 표시줄 및 탐색' },
  { icon: 'device', label: '장치 관리자' },
  { icon: 'printer', label: '장치 및 프린터' },
  { icon: 'storage', label: '저장소 공간' },
  { icon: 'power', label: '전원 옵션' },
  { icon: 'phone', label: '전화 및 모뎀' },
  { icon: 'ease', label: '접근성 센터' },
  { icon: 'cloud', label: '클라우드 폴더' },
  { icon: 'keyboard', label: '키보드' },
  { icon: 'options', label: '파일 탐색기 옵션', hover: true },
  { icon: 'history', label: '파일 히스토리' },
  { icon: 'programs', label: '프로그램 및 기능' },
];

const Chevron = () => (
  <svg width="6" height="8" viewBox="0 0 6 8"><path d="M1 1L4 4 1 7" fill="none" stroke="#6a6a6a" strokeWidth="1.400" /></svg>
);

export default function App() {
  return (
    <>
      <GlobalStyle />
      <Window>
        <TitleBar>
          <AppGlyph />
          <TitleText>모든 제어판 항목</TitleText>
          <WindowButtons>
            <svg width="11" height="11"><path d="M.5 5.500H10.500" stroke="#000" /></svg>
            <svg width="11" height="11"><rect x=".5" y=".5" width="10" height="10" fill="none" stroke="#000" /></svg>
            <svg width="11" height="11"><path d="M.5 .5L10.500 10.500M10.500 .5L.5 10.500" stroke="#000" strokeWidth="1.100" /></svg>
          </WindowButtons>
        </TitleBar>
        <NavBar>
          <NavArrows>
            <svg width="93" height="16" viewBox="0 0 93 16">
              <path d="M12.500 8H1M5.500 3.500L1 8 5.500 12.500M30 8H41.500M37 3.500L41.500 8 37 12.500" fill="none" stroke="#dedede" strokeWidth="1.600" />
              <path d="M57 6L59.500 8.500 62 6" fill="none" stroke="#d5d5d5" strokeWidth="1.300" />
              <path d="M80 13.500V3M75.500 7.500L80 3 84.500 7.500" fill="none" stroke="#777" strokeWidth="1.800" />
            </svg>
          </NavArrows>
          <AddressBar>
            <AppGlyph />
            <svg width="7" height="8" /><Chevron />
            <Crumb>제어판</Crumb><Chevron />
            <Crumb>모든 제어판 항목</Crumb><Chevron />
            <Spring />
            <svg width="10" height="8" viewBox="0 0 10 8"><path d="M1 2.500L5 6.500 9 2.500" fill="none" stroke="#777" strokeWidth="1.700" /></svg>
            <RefreshButton>
              <svg width="12" height="12" viewBox="0 0 12 12"><path d="M3.500 2.500A4.300 4.300 0 1 0 8.500 2.500" fill="none" stroke="#747474" strokeWidth="1.600" /><path d="M1.500 1.500H5V5" fill="none" stroke="#747474" strokeWidth="1.500" /></svg>
            </RefreshButton>
          </AddressBar>
          <SearchBox>
            <span>제어판 검색</span>
            <svg width="13" height="13" viewBox="0 0 13 13"><circle cx="8" cy="5" r="3.200" fill="none" stroke="#707070" strokeWidth="1.500" /><path d="M5.700 7.300L1.200 11.800" stroke="#707070" strokeWidth="1.800" /></svg>
          </SearchBox>
        </NavBar>
        <Heading>
          <HeadingTitle>컴퓨터 설정 변경</HeadingTitle>
          <ViewLabel>보기 기준:</ViewLabel>
          <ViewValue>큰 아이콘</ViewValue>
          <svg width="8" height="4"><path d="M0 0H8L4 4Z" fill="#0066cc" /></svg>
        </Heading>
        <Body>
          <Grid>
            {ENTRIES.map((e) => (
              <Item key={e.icon} $hover={e.hover}>
                <ItemIcon width="32" height="32" viewBox="0 0 32 32">{ICONS[e.icon]}</ItemIcon>
                <ItemLabel $hover={e.hover} $low={e.low}>{e.label}</ItemLabel>
              </Item>
            ))}
          </Grid>
          <ScrollBar>
            <svg width="13" height="17"><path d="M3.500 11.500L7 8 10.500 11.500" fill="none" stroke="#555" strokeWidth="2" /></svg>
            <ScrollGap />
            <Thumb />
            <svg width="13" height="14"><path d="M3.500 6.500L7 10 10.500 6.500" fill="none" stroke="#555" strokeWidth="2" /></svg>
          </ScrollBar>
        </Body>
        <Highlight />
        <Tooltip>
          파일 탐색기 옵션<br />
          파일 및 폴더 표시를 사용자 지정합니<br />
          다
        </Tooltip>
      </Window>
      <Defs />
    </>
  );
}
